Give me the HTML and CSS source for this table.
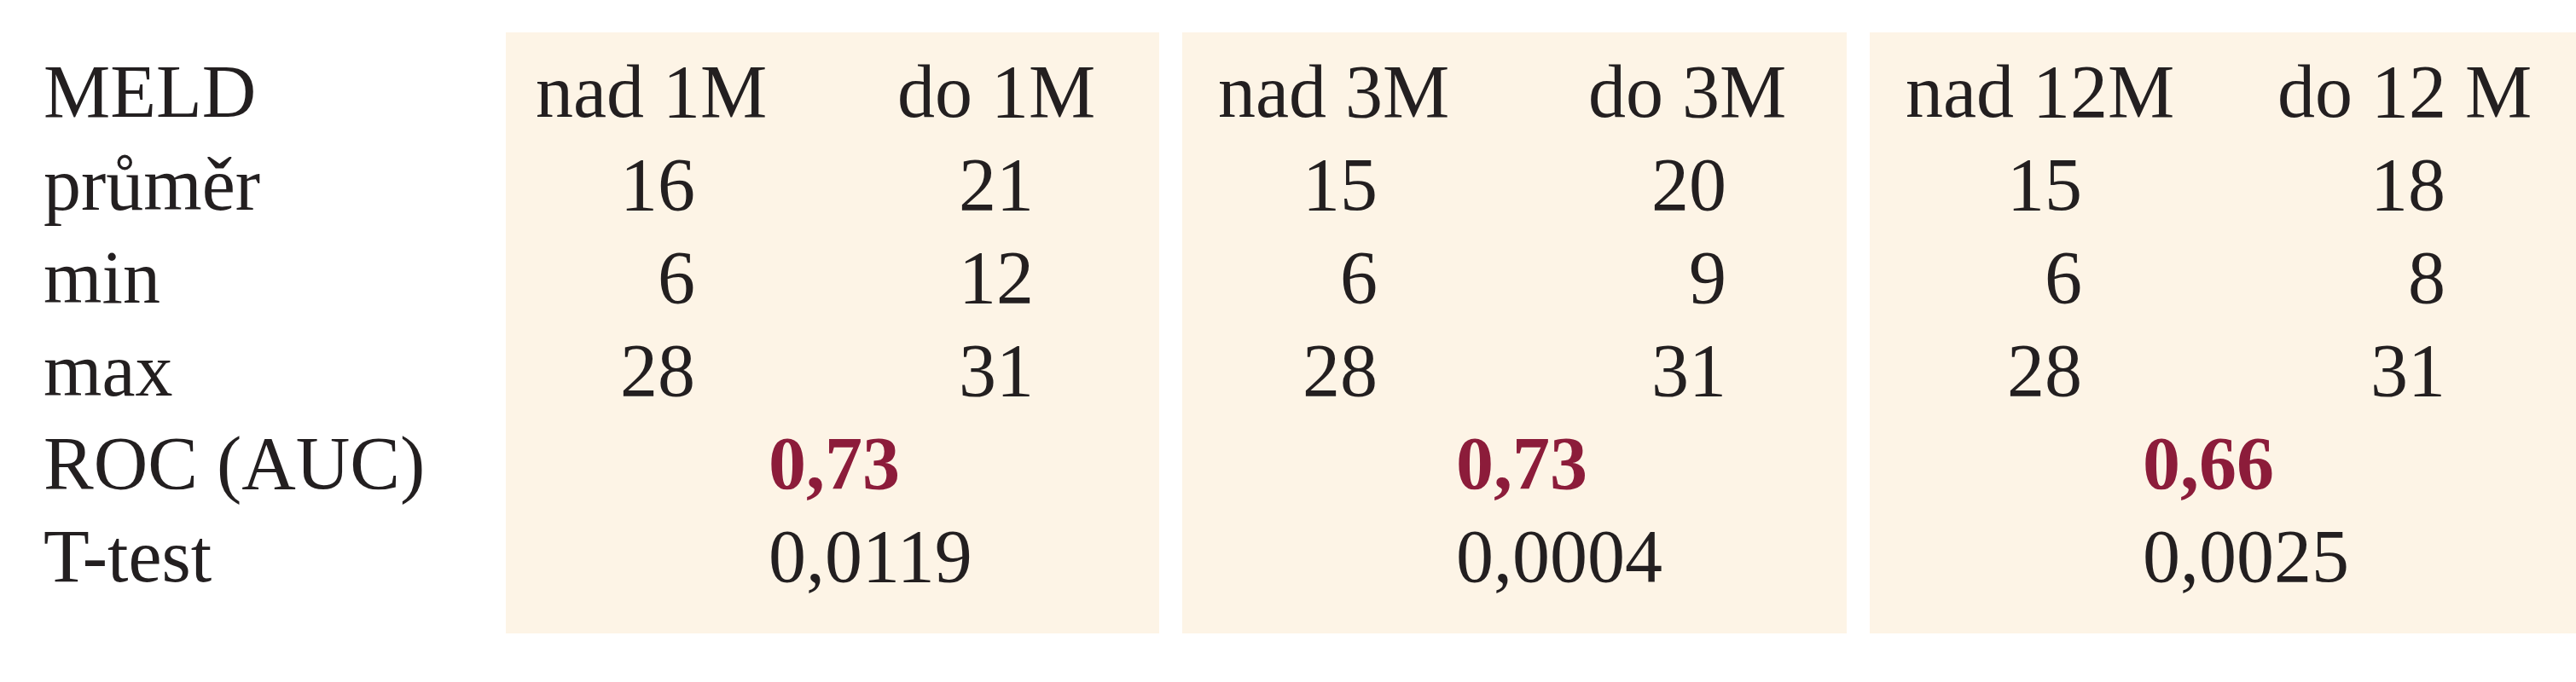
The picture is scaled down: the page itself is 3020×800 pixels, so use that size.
FILE: index.html
```html
<!DOCTYPE html>
<html lang="cs">
<head>
<meta charset="utf-8">
<title>MELD</title>
<link rel="stylesheet" href="styles.css">
</head>
<body>
<div class="table">
  <div class="labels">
    <div class="cell">MELD</div>
    <div class="cell">průměr</div>
    <div class="cell">min</div>
    <div class="cell">max</div>
    <div class="cell">ROC (AUC)</div>
    <div class="cell">T-test</div>
  </div>
  <div class="panel p1">
    <div class="hd">nad 1M</div><div class="hd">do 1M</div>
    <div class="num n1">16</div><div class="num n2">21</div>
    <div class="num n1">6</div><div class="num n2">12</div>
    <div class="num n1">28</div><div class="num n2">31</div>
    <div class="wide roc">0,73</div>
    <div class="wide">0,0119</div>
  </div>
  <div class="panel p2">
    <div class="hd">nad 3M</div><div class="hd">do 3M</div>
    <div class="num n1">15</div><div class="num n2">20</div>
    <div class="num n1">6</div><div class="num n2">9</div>
    <div class="num n1">28</div><div class="num n2">31</div>
    <div class="wide roc">0,73</div>
    <div class="wide">0,0004</div>
  </div>
  <div class="panel p3">
    <div class="hd">nad 12M</div><div class="hd">do 12 M</div>
    <div class="num n1">15</div><div class="num n2">18</div>
    <div class="num n1">6</div><div class="num n2">8</div>
    <div class="num n1">28</div><div class="num n2">31</div>
    <div class="wide roc">0,66</div>
    <div class="wide">0,0025</div>
  </div>
</div>
</body>
</html>
```
FILE: styles.css
```css
html, body {
  margin: 0;
  padding: 0;
  background: #ffffff;
}

body {
  width: 3020px;
  height: 800px;
  overflow: hidden;
  font-family: "Liberation Serif", "Times New Roman", serif;
  font-size: 88px;
  color: #231f20;
}

.table {
  display: grid;
  grid-template-columns: 566px 766px 779px 836px;
  column-gap: 27px;
  padding-top: 38px;
}

.labels {
  display: grid;
  grid-auto-rows: 109px;
  padding: 15px 0 36px 51px;
}

.cell,
.hd,
.num,
.wide {
  line-height: 109px;
  white-space: nowrap;
}

.panel {
  display: grid;
  grid-template-columns: var(--c1) 1fr;
  grid-auto-rows: 109px;
  padding: 15px 0 36px var(--pl);
  background: #fdf4e6;
}

.p1 { --pl: 35px; --c1: 424px; --n1: 187px; --n2: 160px; --wp: 273px; }
.p2 { --pl: 42px; --c1: 434px; --n1: 187px; --n2: 162px; --wp: 279px; }
.p3 { --pl: 42px; --c1: 436px; --n1: 207px; --n2: 197px; --wp: 278px; }

.num {
  justify-self: start;
  text-align: right;
}

.n1 { width: var(--n1); }
.n2 { width: var(--n2); }

.wide {
  grid-column: 1 / -1;
  padding-left: var(--wp);
}

.roc {
  font-weight: 700;
  color: #8c1c3a;
}
```
